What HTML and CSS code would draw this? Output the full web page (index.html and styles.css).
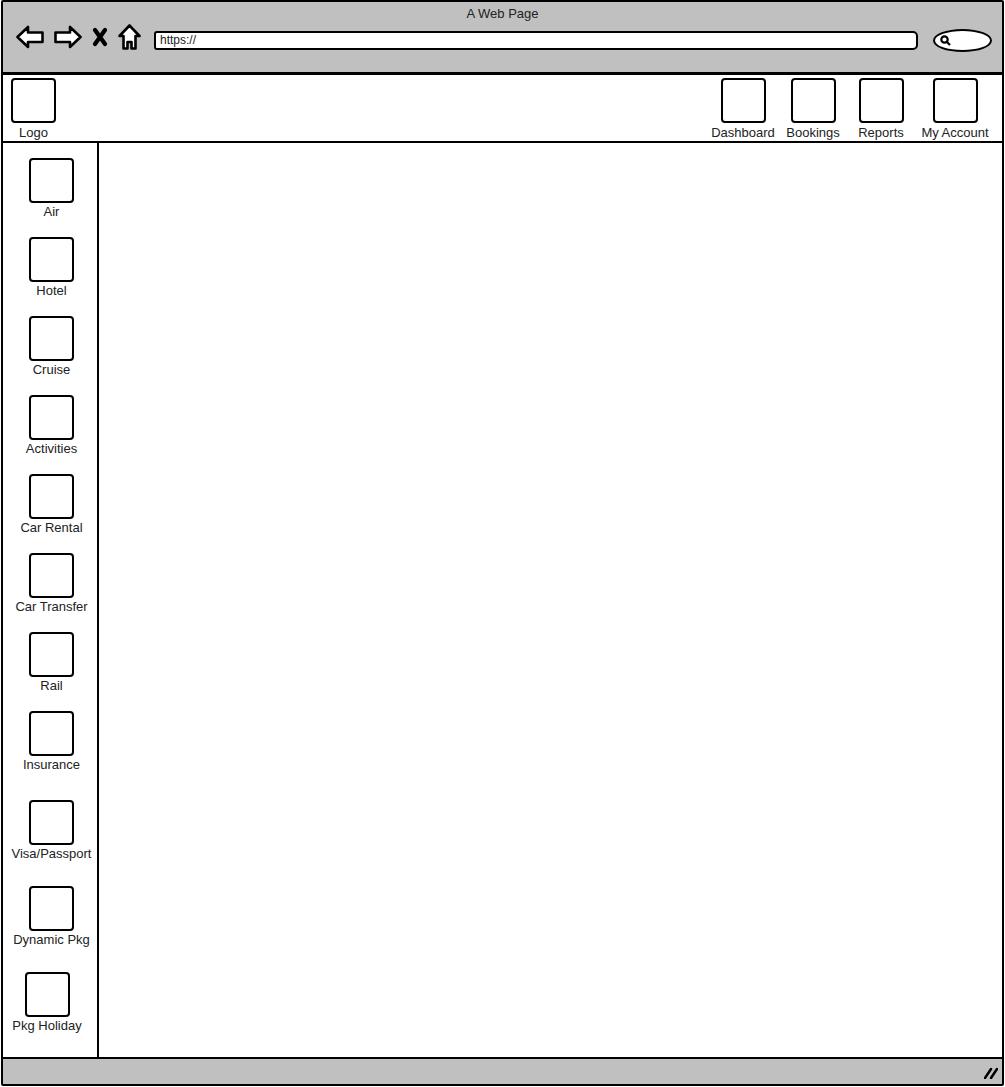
FILE: index.html
```html
<!DOCTYPE html>
<html lang="en">

<head>
    <meta charset="UTF-8">
    <meta name="viewport" content="width=device-width, initial-scale=1.0">
    <title>A Web Page</title>
    <link rel="stylesheet" href="styles.css">
</head>

<body>
    <div class="window">
        <div class="titlebar">
            <div class="title">A Web Page</div>
            <div class="toolbar">
                <svg class="tool back" width="28" height="24" viewBox="0 0 28 24">
                    <polygon points="1.5,12 12,2 12,7.5 26.5,7.5 26.5,17 12,17 12,22" />
                </svg>
                <svg class="tool forward" width="28" height="24" viewBox="0 0 28 24">
                    <polygon points="26.5,12 16,2 16,7.5 1.5,7.5 1.5,17 16,17 16,22" />
                </svg>
                <svg class="tool stop" width="16" height="20" viewBox="0 0 16 20">
                    <path d="M3 3 L13 17 M13 3 L3 17" />
                </svg>
                <svg class="tool home" width="23" height="26" viewBox="0 0 23 26">
                    <polygon points="11.5,1.5 21.5,12 17.5,12 17.5,24.5 13.5,24.5 13.5,18 9.5,18 9.5,24.5 5.5,24.5 5.5,12 1.5,12" />
                </svg>
                <div class="url">https://</div>
                <div class="search">
                    <svg width="11" height="11" viewBox="0 0 11 11">
                        <circle cx="4.5" cy="4.5" r="3.2" />
                        <path d="M7 7 L10 10" />
                    </svg>
                </div>
            </div>
        </div>

        <div class="header">
            <div class="item logo">
                <div class="box"></div>
                <span class="label">Logo</span>
            </div>
            <div class="nav">
                <div class="item">
                    <div class="box"></div>
                    <span class="label">Dashboard</span>
                </div>
                <div class="item">
                    <div class="box"></div>
                    <span class="label">Bookings</span>
                </div>
                <div class="item">
                    <div class="box"></div>
                    <span class="label">Reports</span>
                </div>
                <div class="item">
                    <div class="box"></div>
                    <span class="label">My Account</span>
                </div>
            </div>
        </div>

        <div class="main">
            <div class="sidebar">
                <div class="item">
                    <div class="box"></div>
                    <span class="label">Air</span>
                </div>
                <div class="item">
                    <div class="box"></div>
                    <span class="label">Hotel</span>
                </div>
                <div class="item">
                    <div class="box"></div>
                    <span class="label">Cruise</span>
                </div>
                <div class="item">
                    <div class="box"></div>
                    <span class="label">Activities</span>
                </div>
                <div class="item">
                    <div class="box"></div>
                    <span class="label">Car Rental</span>
                </div>
                <div class="item">
                    <div class="box"></div>
                    <span class="label">Car Transfer</span>
                </div>
                <div class="item">
                    <div class="box"></div>
                    <span class="label">Rail</span>
                </div>
                <div class="item">
                    <div class="box"></div>
                    <span class="label">Insurance</span>
                </div>
                <div class="item wide-gap">
                    <div class="box"></div>
                    <span class="label">Visa/Passport</span>
                </div>
                <div class="item mid-gap">
                    <div class="box"></div>
                    <span class="label">Dynamic Pkg</span>
                </div>
                <div class="item mid-gap shifted">
                    <div class="box"></div>
                    <span class="label">Pkg Holiday</span>
                </div>
            </div>
            <div class="content"></div>
        </div>

        <div class="statusbar">
            <svg class="resize" width="14" height="14" viewBox="0 0 14 14">
                <path d="M1 13 L7 4 M7 13 L13 4" />
            </svg>
        </div>
    </div>
</body>

</html>
```

FILE: styles.css
```css
* {
    margin: 0;
    padding: 0;
    box-sizing: border-box;
}

body {
    font-family: "Liberation Sans", Arial, sans-serif;
    font-size: 13px;
    color: #222;
    background: #fff;
}

.window {
    display: flex;
    flex-direction: column;
    width: 1003px;
    height: 1086px;
    margin-left: 1px;
    border: 2px solid #000;
    border-radius: 2px;
}

/* browser chrome */

.titlebar {
    height: 73px;
    background: #c0c0c0;
    border-bottom: 3px solid #000;
}

.title {
    padding-top: 4px;
    line-height: 15px;
    text-align: center;
}

.toolbar {
    display: flex;
    align-items: center;
    gap: 10px;
    height: 38px;
    padding: 0 10px 0 13px;
}

.tool {
    margin-bottom: 6px;
}

.tool polygon {
    fill: #fff;
    stroke: #000;
    stroke-width: 2.6;
    stroke-linejoin: round;
}

.tool path {
    fill: none;
    stroke: #000;
    stroke-width: 4.2;
    stroke-linecap: round;
}

.url {
    flex: 1;
    height: 19px;
    margin: 0 5px 0 3px;
    padding-left: 4px;
    background: #fff;
    border: 2px solid #000;
    border-radius: 3px 5px 5px 3px;
    font-size: 12px;
    line-height: 15px;
}

.search {
    display: flex;
    align-items: center;
    width: 59px;
    height: 23px;
    padding-left: 5px;
    background: #fff;
    border: 2px solid #000;
    border-radius: 50%;
}

.search circle,
.search path {
    fill: none;
    stroke: #000;
    stroke-width: 2.2;
}

/* page header */

.header {
    display: flex;
    justify-content: space-between;
    height: 68px;
    padding: 3px 6px 0 8px;
    background: #fff;
    border-bottom: 2px solid #000;
}

.nav {
    display: grid;
    grid-template-columns: 70px 70px 66px 82px;
}

.item {
    display: flex;
    flex-direction: column;
    align-items: center;
}

.box {
    width: 45px;
    height: 45px;
    border: 2px solid #000;
    border-radius: 4px;
    background: #fff;
}

.label {
    margin-top: 1px;
    line-height: 15px;
    white-space: nowrap;
}

.header .label {
    margin-top: 2px;
}

/* body */

.main {
    flex: 1;
    display: flex;
}

.sidebar {
    display: flex;
    flex-direction: column;
    align-items: center;
    gap: 18px;
    width: 96px;
    padding: 15px 0 0 3px;
    border-right: 2px solid #000;
}

.sidebar .wide-gap {
    margin-top: 10px;
}

.sidebar .mid-gap {
    margin-top: 7px;
}

.sidebar .shifted {
    margin-right: 9px;
}

.content {
    flex: 1;
    background: #fff;
}

.statusbar {
    display: flex;
    align-items: center;
    justify-content: flex-end;
    height: 27px;
    padding-right: 4px;
    background: #c0c0c0;
    border-top: 2px solid #000;
}

.resize path {
    fill: none;
    stroke: #000;
    stroke-width: 2.5;
    stroke-linecap: round;
}
```
